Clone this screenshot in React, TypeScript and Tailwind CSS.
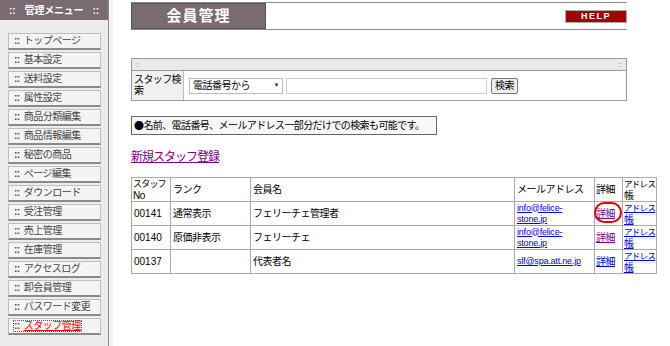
const MENU = [
  "トップページ",
  "基本設定",
  "送料設定",
  "属性設定",
  "商品分類編集",
  "商品情報編集",
  "秘密の商品",
  "ページ編集",
  "ダウンロード",
  "受注管理",
  "売上管理",
  "在庫管理",
  "アクセスログ",
  "卸会員管理",
  "パスワード変更",
  "スタッフ管理",
]

const STAFF = [
  { no: "00141", rank: "通常表示", name: "フェリーチェ管理者", mail: ["info@felice-", "stone.jp"], visited: true },
  { no: "00140", rank: "原価非表示", name: "フェリーチェ", mail: ["info@felice-", "stone.jp"], visited: true },
  { no: "00137", rank: "", name: "代表者名", mail: ["slf@spa.att.ne.jp"], visited: false },
]

function Sidebar() {
  return (
    <aside className="flex w-[109px] shrink-0 flex-col border-r border-[#8c8c8c] bg-[#ececec]">
      <div className="flex h-[20px] items-center justify-center gap-[9px] bg-[#7a6b70] text-[10px] font-bold text-white">
        <span>::</span>
        <span className="tracking-[-0.2px]">管理メニュー</span>
        <span>::</span>
      </div>
      <ul className="flex flex-col gap-[2px] px-[8px] pt-[13px]">
        {MENU.map((item, i) => {
          const active = i === MENU.length - 1
          return (
            <li
              key={item}
              className="flex h-[17px] w-[93px] items-center border border-[#bdbdbd] border-b-2 border-b-[#8a8a8a] bg-[#f4f4f4] pl-[5px] text-[10px] leading-none tracking-[-0.5px] text-[#444]"
            >
              {active ? (
                <span className="outline-1 outline-dotted outline-[#555]">
                  <span className="mr-[4px] font-bold">::</span>
                  <span className="text-[#ff0000] underline">{item}</span>
                </span>
              ) : (
                <>
                  <span className="mr-[4px] font-bold">::</span>
                  {item}
                </>
              )}
            </li>
          )
        })}
      </ul>
    </aside>
  )
}

export default function App() {
  return (
    <div className="flex h-[346px] w-[670px] overflow-hidden bg-white font-['Liberation_Sans','Noto_Sans_CJK_JP',sans-serif] text-[10px] text-black">
      <Sidebar />
      <div className="w-[4px] shrink-0 bg-[#f3f3f3]" />

      <main className="flex flex-col pl-[18px] pt-[2px]">
        {/* page title */}
        <div className="flex h-[28px] w-[496px] items-stretch border-y border-[#8a8a8a]">
          <div className="flex w-[135px] items-center justify-center border border-[#555] bg-[#7a6b70] text-[15px] font-bold tracking-[1px] text-white">
            会員管理
          </div>
          <div className="flex flex-1 items-start justify-end pt-[7px]">
            <span className="flex h-[13px] w-[62px] items-center justify-center border border-[#aaa] bg-[#a40000] text-[9px] font-bold tracking-[1.5px] text-white">
              HELP
            </span>
          </div>
        </div>

        {/* search box */}
        <div className="mt-[28px] w-[496px] border border-[#999]">
          <div className="flex h-[12px] items-center justify-between border-b border-[#999] bg-[#e9e9e9] px-[4px] text-[7px] leading-none text-[#888]">
            <span>::</span>
            <span>::</span>
          </div>
          <div className="flex h-[29px] items-stretch">
            <div className="w-[52px] border-r border-[#bbb] bg-[#f0f0f0] px-[2px] pt-[3px] text-[10px] leading-[11px] tracking-[-0.6px]">
              スタッフ検<br />索
            </div>
            <div className="flex items-center pl-[5px]">
              <div className="flex h-[16px] w-[94px] items-center justify-between border border-[#bbb] bg-white px-[3px] text-[10px] tracking-[-0.5px]">
                <span>電話番号から</span>
                <span className="text-[6px] text-[#333]">▼</span>
              </div>
              <div className="ml-[3px] h-[16px] w-[201px] border border-[#ccc] bg-white" />
              <button className="ml-[4px] flex h-[16px] w-[27px] items-center justify-center rounded-[2px] border border-[#777] bg-[#ececec] text-[10px] tracking-[-0.5px]">
                検索
              </button>
            </div>
          </div>
        </div>

        {/* notice */}
        <div className="mt-[15px] flex h-[19px] w-[306px] items-center border border-[#666] bg-[#f7f7f7] pl-[2px] text-[10px] tracking-[-0.6px]">
          <span className="font-['Noto_Sans_CJK_JP',sans-serif]">●</span>名前、電話番号、メールアドレス一部分だけでの検索も可能です。
        </div>

        <a className="mt-[15px] w-fit text-[12px] leading-[14px] tracking-[-1px] text-[#800080] underline">新規スタッフ登録</a>

        {/* staff table */}
        <div className="relative mt-[13px] w-[525px]">
          <table className="w-[525px] table-fixed border-collapse border border-[#aaa] text-[10px] leading-[11px] tracking-[-0.5px]">
            <colgroup>
              <col className="w-[39px]" />
              <col className="w-[80px]" />
              <col className="w-[264px]" />
              <col className="w-[80px]" />
              <col className="w-[28px]" />
              <col className="w-[34px]" />
            </colgroup>
            <thead>
              <tr className="h-[24px]">
                <th className="border border-[#aaa] px-[1px] text-left font-normal">
                  <span className="text-[9px] tracking-[-0.8px]">スタッフ</span>
                  <br />
                  No
                </th>
                <th className="border border-[#aaa] px-[2px] text-left font-normal">ランク</th>
                <th className="border border-[#aaa] px-[2px] text-left font-normal">会員名</th>
                <th className="border border-[#aaa] px-[2px] text-left font-normal">メールアドレス</th>
                <th className="border border-[#aaa] px-[1px] text-left font-normal">詳細</th>
                <th className="border border-[#aaa] px-[1px] text-left font-normal">
                  <span className="whitespace-nowrap text-[8.5px] tracking-[-0.7px]">アドレス</span>
                  <br />
                  帳
                </th>
              </tr>
            </thead>
            <tbody>
              {STAFF.map((s) => (
                <tr key={s.no} className="h-[24px]">
                  <td className="border border-[#aaa] px-[2px] tracking-normal">{s.no}</td>
                  <td className="border border-[#aaa] px-[2px]">{s.rank}</td>
                  <td className="border border-[#aaa] px-[2px]">{s.name}</td>
                  <td className="border border-[#aaa] px-[2px] text-[9px] tracking-[-0.2px]">
                    <a className="text-[#0000ee] underline">
                      {s.mail.map((m, i) => (
                        <span key={i} className="block">{m}</span>
                      ))}
                    </a>
                  </td>
                  <td className="border border-[#aaa] px-[1px]">
                    <a className={`underline ${s.visited ? "text-[#800080]" : "text-[#0000ee]"}`}>詳細</a>
                  </td>
                  <td className="border border-[#aaa] px-[1px]">
                    <a className="text-[#0000ee] underline">
                      <span className="whitespace-nowrap text-[8.5px] tracking-[-0.7px]">アドレス</span>
                      <br />
                      帳
                    </a>
                  </td>
                </tr>
              ))}
            </tbody>
          </table>
          {/* annotation circle */}
          <span className="pointer-events-none absolute left-[463px] top-[25px] h-[21px] w-[28px] rounded-full border-2 border-[#e00000]" />
        </div>
      </main>
    </div>
  )
}
